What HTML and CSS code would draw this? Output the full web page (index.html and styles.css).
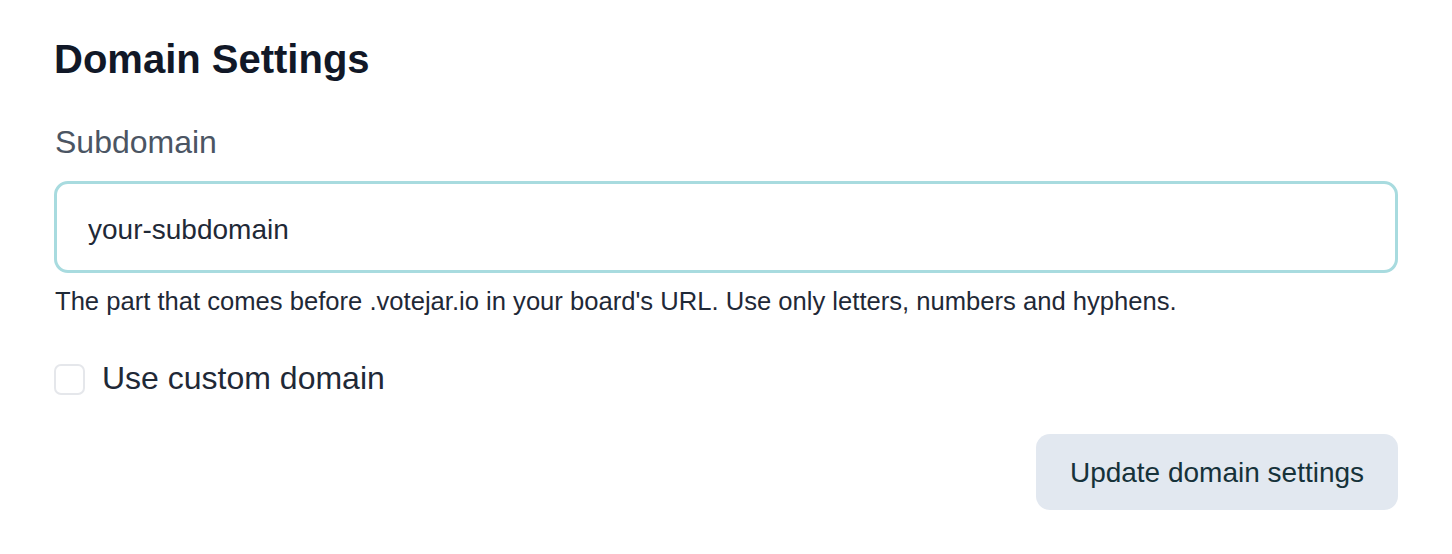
FILE: index.html
```html
<!DOCTYPE html>
<html lang="en">
<head>
  <meta charset="UTF-8">
  <meta name="viewport" content="width=device-width, initial-scale=1.0">
  <title>Domain Settings</title>
  <link rel="stylesheet" href="styles.css">
</head>
<body>
  <form class="panel">
    <h1>Domain Settings</h1>

    <label class="fieldLabel" for="subdomain">Subdomain</label>
    <input type="text" id="subdomain" name="subdomain" value="your-subdomain">
    <p class="help">The part that comes before .votejar.io in your board's URL. Use only letters, numbers and hyphens.</p>

    <label class="check">
      <input type="checkbox" name="customDomain">
      <span class="box"></span>
      <span>Use custom domain</span>
    </label>

    <div class="actions">
      <button type="button">Update domain settings</button>
    </div>
  </form>
</body>
</html>
```

FILE: styles.css
```css
body { margin: 0; background: #fff; font-family: "Liberation Sans", Arial, sans-serif; color: #1f2937; }
.panel { padding: 35px 54px 0 54px; display: flex; flex-direction: column; }
h1 { font-size: 40px; font-weight: bold; color: #111827; margin: 0 0 39px 0; line-height: 48px; }
.fieldLabel { font-size: 32px; color: #4b5563; line-height: 40px; margin-left: 1px; }
#subdomain { margin-top: 19px; height: 92px; box-sizing: border-box; border: 3px solid #a8dbdf; border-radius: 14px; padding: 5px 31px 0 31px; font: inherit; font-size: 28px; color: #1f2937; outline: none; }
.help { font-size: 25.6px; color: #1f2937; margin: 12px 0 0 1px; line-height: 32px; }
.check { display: flex; align-items: flex-start; gap: 17px; margin-top: 41px; font-size: 32px; line-height: 40px; color: #1f2937; }
.check input { display: none; }
.box { width: 31px; height: 31px; box-sizing: border-box; margin-top: 6px; border: 2px solid #e5e7eb; border-radius: 7px; }
.actions { display: flex; justify-content: flex-end; margin-top: 36px; }
button { width: 362px; height: 76px; border: 0; border-radius: 14px; background: #e2e8f0; color: #16323a; font: inherit; font-size: 28px; padding-top: 2px; }
```
